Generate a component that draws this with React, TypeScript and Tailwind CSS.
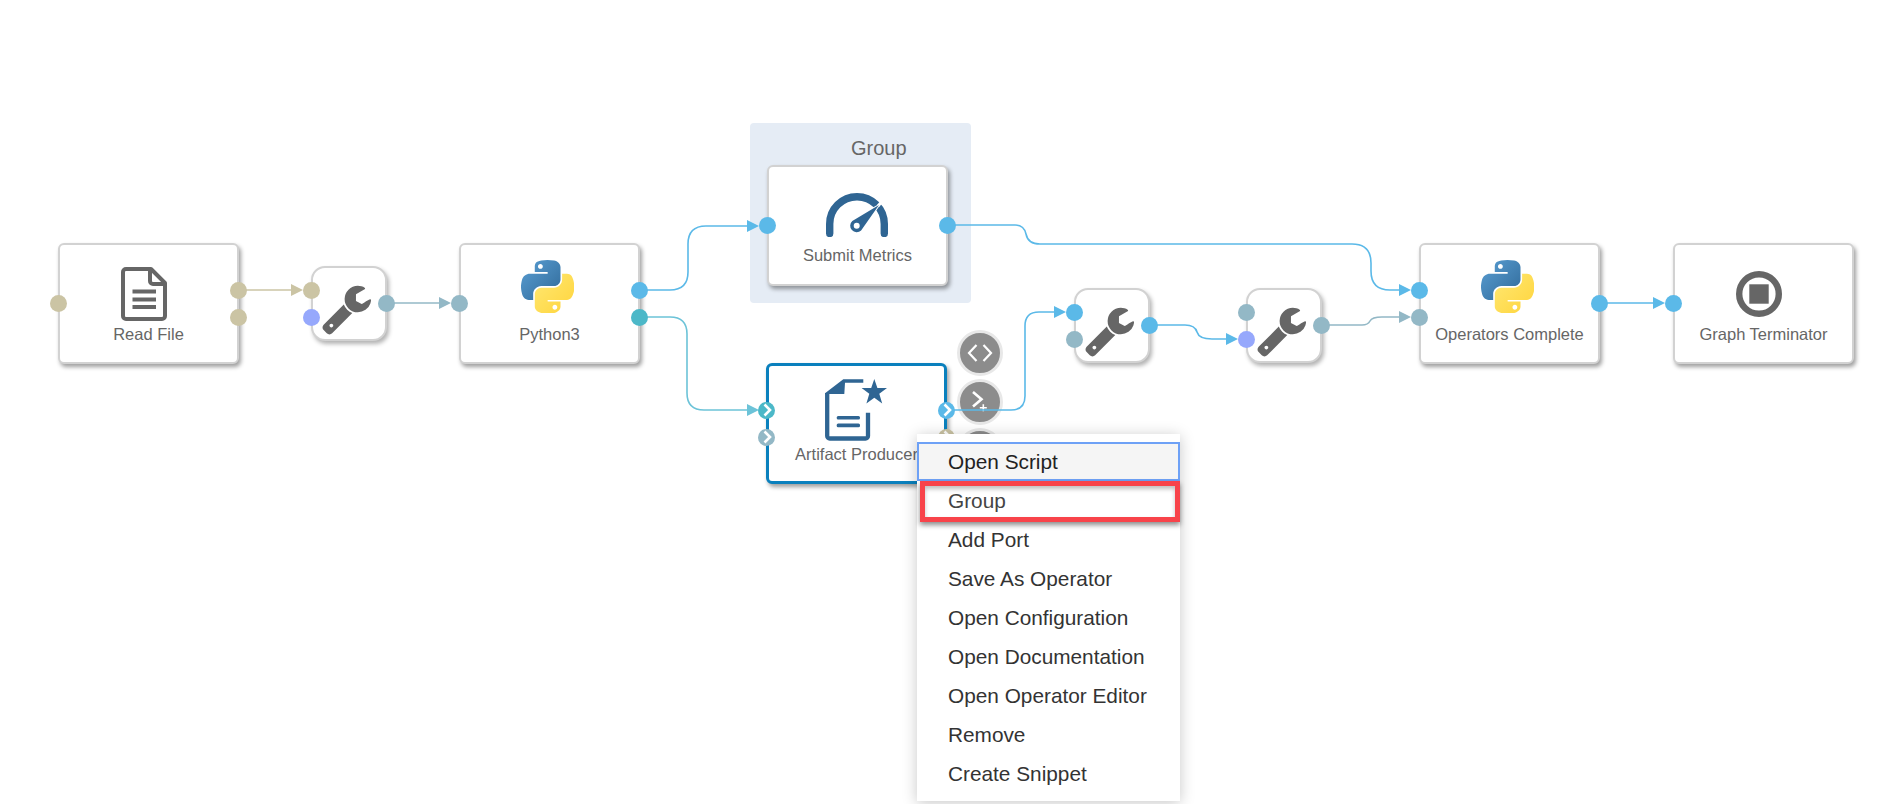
import { useId, type ReactNode } from "react";

const BLUE = "#5bb9e8";
const TAN = "#cbc4a4";
const SLATE = "#93b8c6";
const TEAL = "#6cc3d8";
const INK = "#666666";
const NAVY = "#2f6593";

// port colours
const pTan = "bg-[#cbc4a4]";
const pBlue = "bg-[#5bb9e8]";
const pSlate = "bg-[#93b8c6]";
const pTeal = "bg-[#4cb8c8]";
const pPurple = "bg-[#96a8fc]";

/* ── Icons ─────────────────────────────────────────────────── */

function PythonIcon() {
  const id = useId();
  return (
    <svg width="53" height="53" viewBox="0 0 110.4 110.4">
      <defs>
        <linearGradient id={`${id}b`} x1="0" y1="0" x2="1" y2="1">
          <stop offset="0" stopColor="#5a9fd4" />
          <stop offset="1" stopColor="#306998" />
        </linearGradient>
        <linearGradient id={`${id}y`} x1="0" y1="0" x2="1" y2="1">
          <stop offset="0" stopColor="#ffe873" />
          <stop offset="1" stopColor="#ffd43b" />
        </linearGradient>
      </defs>
      <path
        fill={`url(#${id}b)`}
        fillRule="evenodd"
        d="M54.919 0.001c-4.584.022-8.961.413-12.812 1.095C30.762 3.099 28.702 7.295 28.702 15.032v10.219h26.812v3.406H18.64c-7.792 0-14.616 4.684-16.75 13.594-2.462 10.213-2.571 16.586 0 27.25 1.906 7.938 6.458 13.594 14.25 13.594h9.219V70.844c0-8.85 7.657-16.656 16.75-16.656h26.781c7.455 0 13.406-6.138 13.406-13.625V15.032c0-7.266-6.13-12.725-13.406-13.937C64.282.328 59.502-.02 54.919 0.001zM40.419 8.219c2.77 0 5.031 2.299 5.031 5.125 0 2.816-2.262 5.094-5.031 5.094-2.78 0-5.031-2.277-5.031-5.094 0-2.826 2.252-5.125 5.031-5.125z"
      />
      <path
        fill={`url(#${id}y)`}
        fillRule="evenodd"
        d="M85.638 28.657v11.906c0 9.231-7.826 17-16.75 17H42.107c-7.336 0-13.406 6.278-13.406 13.625v25.531c0 7.266 6.319 11.54 13.406 13.625 8.487 2.496 16.626 2.947 26.781 0 6.75-1.954 13.406-5.888 13.406-13.625V86.5H55.513v-3.406h40.187c7.792 0 10.696-5.435 13.406-13.594 2.799-8.399 2.68-16.476 0-27.25-1.926-7.757-5.604-13.594-13.406-13.594H85.638zM70.575 93.313c2.78 0 5.031 2.277 5.031 5.094 0 2.826-2.252 5.125-5.031 5.125-2.77 0-5.031-2.299-5.031-5.125 0-2.816 2.262-5.094 5.031-5.094z"
      />
    </svg>
  );
}

function FileIcon() {
  return (
    <svg width="46" height="54" viewBox="0 0 46 54" fill="none" stroke={INK} strokeWidth="4" strokeLinejoin="round">
      <path d="M5 2H30L44 16V49a3 3 0 0 1-3 3H5a3 3 0 0 1-3-3V5a3 3 0 0 1 3-3z" />
      <path d="M29 2V14a3 3 0 0 0 3 3H44" />
      <path d="M11.5 24.5H35M11.5 32.5H35M11.5 40H35" />
    </svg>
  );
}

function WrenchIcon() {
  return (
    <svg width="53" height="53" viewBox="0 0 1792 1792" fill={INK}>
      <path d="M448 1472q0-26-19-45t-45-19-45 19-19 45 19 45 45 19 45-19 19-45zm644-420l-682 682q-37 37-90 37-52 0-91-37l-106-108q-38-36-38-90 0-53 38-91l681-681q39 98 114.5 173.5t173.5 114.5zm634-435q0 39-23 106-47 134-164.5 217.5t-258.5 83.5q-185 0-316.5-131.5t-131.5-316.5 131.5-316.5 316.5-131.5q58 0 121.5 16.5t107.5 46.5q16 11 16 28t-16 28l-293 169v224l193 107q5-3 79-48.5t135.5-81 70.5-35.5q15 0 23.5 10t8.5 25z" />
    </svg>
  );
}

function GaugeIcon() {
  return (
    <svg width="62" height="44" viewBox="0 0 62 44" fill="none">
      <path d="M3.7 40.5V31A27.3 27.3 0 0 1 58.3 31V40.5" stroke={NAVY} strokeWidth="7.4" strokeLinecap="round" />
      <path d="M52 13L60 4" stroke="#ffffff" strokeWidth="3" />
      <path
        d="M53 12L35.1 37.5A6.5 6.5 0 1 1 26.3 27.9z"
        fill={NAVY}
        stroke="#ffffff"
        strokeWidth="2"
        paintOrder="stroke"
      />
      <circle cx="30.7" cy="32.7" r="3" fill="#ffffff" />
    </svg>
  );
}

function ArtifactIcon() {
  return (
    <svg width="64" height="62" viewBox="0 0 64 62" fill={NAVY}>
      <path d="M0 14.3L18.3.3H38.3V3.7H20L19.3 15H0z" />
      <path d="M2.2 14V57a2.5 2.5 0 0 0 2.5 2.5H40.5A2.5 2.5 0 0 0 43 57V33.7" fill="none" stroke={NAVY} strokeWidth="4.3" />
      <rect x="11.7" y="37" width="23.3" height="3.4" rx="1.5" />
      <rect x="11.7" y="44.4" width="23.3" height="3.8" rx="1.5" />
      <path d="M49.3 0L52.4 9H62L54.3 14.8 57.2 24.4 49.3 18.8 41.4 24.4 44.3 14.8 36.6 9H46.2z" />
    </svg>
  );
}

function StopIcon() {
  return (
    <svg width="46" height="46" viewBox="0 0 46 46">
      <circle cx="23" cy="23" r="19.8" fill="none" stroke={INK} strokeWidth="6.4" />
      <rect x="13.3" y="13.3" width="19.4" height="19.4" fill={INK} />
    </svg>
  );
}

function Chevron() {
  return (
    <svg width="16" height="16" viewBox="0 0 16 16" fill="none" stroke="#ffffff" strokeWidth="2.6">
      <path d="M5.5 2.5L11 8 5.5 13.5" />
    </svg>
  );
}

/* ── Canvas pieces ─────────────────────────────────────────── */

function Ports({
  side,
  colors,
  chevron,
}: {
  side: string;
  colors: string[];
  chevron?: boolean;
}) {
  return (
    <div className={`absolute inset-y-0 flex flex-col justify-center gap-[10px] ${side}`}>
      {colors.map((c, i) => (
        <div key={i} className={`flex h-[17px] w-[17px] items-center justify-center rounded-full ${c}`}>
          {chevron && <Chevron />}
        </div>
      ))}
    </div>
  );
}

function Node({
  className,
  label,
  iconClass,
  inPorts,
  outPorts,
  selected,
  children,
}: {
  className: string;
  label: string;
  iconClass: string;
  inPorts: string[];
  outPorts: string[];
  selected?: boolean;
  children: ReactNode;
}) {
  return (
    <div
      className={`absolute box-border flex h-[121px] w-[181px] flex-col items-center rounded-[6px] bg-white text-[16.5px] leading-[20px] text-[#666] shadow-[2px_3px_4px_rgba(0,0,0,0.38)] ${
        selected ? "border-[3px] border-[#0a80bd] pt-[13px]" : "border-2 border-[#d2d2d2] pt-[14px]"
      } ${className}`}
    >
      <div className={`flex h-[64px] items-start ${iconClass}`}>{children}</div>
      <div className="mt-px whitespace-nowrap">{label}</div>
      <Ports side={selected ? "-left-[11px]" : "-left-[10px]"} colors={inPorts} chevron={selected} />
      <Ports side={selected ? "-right-[11px]" : "-right-[10px]"} colors={outPorts} chevron={selected} />
    </div>
  );
}

function WrenchNode({
  className,
  inPorts,
  outPorts,
}: {
  className: string;
  inPorts: string[];
  outPorts: string[];
}) {
  return (
    <div
      className={`absolute box-border h-[75px] w-[76px] rounded-[14px] border-2 border-[#d2d2d2] bg-white pl-[7px] pt-[14px] shadow-[2px_3px_4px_rgba(0,0,0,0.3)] ${className}`}
    >
      <WrenchIcon />
      <Ports side="-left-[10px]" colors={inPorts} />
      <Ports side="-right-[10px]" colors={outPorts} />
    </div>
  );
}

function Edge({ d, color }: { d: string; color: string }) {
  return <path d={d} fill="none" stroke={color} strokeWidth="1.6" />;
}

function Arrow({ x, y, color }: { x: number; y: number; color: string }) {
  return <path d={`M${x} ${y}l-12 -6v12z`} fill={color} />;
}

function ActionButton({ children }: { children?: ReactNode }) {
  return (
    <div className="flex h-[46px] w-[46px] items-center justify-center rounded-full border-[3px] border-[#e8e8e8] bg-[#8c8c8c]">
      {children}
    </div>
  );
}

/* ── Page ──────────────────────────────────────────────────── */

const menuItems = [
  "Add Port",
  "Save As Operator",
  "Open Configuration",
  "Open Documentation",
  "Open Operator Editor",
  "Remove",
  "Create Snippet",
];

export default function App() {
  return (
    <div className="relative h-[804px] w-[1881px] overflow-hidden bg-white font-['Liberation_Sans',Arial,sans-serif]">
      {/* Group frame */}
      <div className="absolute left-[750px] top-[123px] h-[180px] w-[221px] rounded-[4px] bg-[#e5ecf5] pl-[101px] pt-[13px] text-[20px] leading-[24px] text-[#666]">
        Group
      </div>

      {/* Quick actions around the selected operator */}
      <div className="absolute left-[957px] top-[330px] flex flex-col gap-[3px]">
        <ActionButton>
          <svg width="26" height="20" viewBox="0 0 26 20" fill="none" stroke="#ffffff" strokeWidth="2.2">
            <path d="M9.5 2L2 10l7.5 8M16.5 2L24 10l-7.5 8" />
          </svg>
        </ActionButton>
        <ActionButton>
          <svg width="24" height="24" viewBox="0 0 24 24" fill="none" stroke="#ffffff" strokeWidth="2.6">
            <path d="M5 2L13.5 9.2 5 16.5" />
            <path d="M15.3 14.2V21.2M11.8 17.7H18.8" strokeWidth="1.6" />
          </svg>
        </ActionButton>
        <ActionButton />
      </div>

      {/* Connections run over the action buttons and under the operators */}
      <svg className="absolute left-0 top-0" width="1881" height="804">
        <Edge d="M238 290H300" color={TAN} />
        <Arrow x={303} y={290} color={TAN} />
        <Edge d="M386 303H445" color={SLATE} />
        <Arrow x={451} y={303} color={SLATE} />
        <Edge d="M640 290H670Q688 290 688 272V244Q688 226 706 226H750" color={BLUE} />
        <Arrow x={759} y={226} color={BLUE} />
        <Edge d="M640 317H670Q687 317 687 334V393Q687 410 704 410H750" color={TEAL} />
        <Arrow x={759} y={410} color={TEAL} />
        <Edge d="M947 225H1015Q1024 225 1026 234Q1028 244 1040 244H1352Q1371 244 1371 263V271Q1371 290 1390 290H1405" color={BLUE} />
        <Arrow x={1411} y={290} color={BLUE} />
        <Edge d="M947 410H1011Q1025 410 1025 396V326Q1025 312 1039 312H1060" color={BLUE} />
        <Arrow x={1066} y={312} color={BLUE} />
        <Edge d="M1149 325H1185Q1195 325 1197 332Q1199 339 1212 339H1233" color={BLUE} />
        <Arrow x={1238} y={339} color={BLUE} />
        <Edge d="M1321 325H1362Q1368 325 1370 321Q1372 317 1382 317H1405" color={SLATE} />
        <Arrow x={1411} y={317} color={SLATE} />
        <Edge d="M1598 303H1660" color={BLUE} />
        <Arrow x={1665} y={303} color={BLUE} />
      </svg>

      {/* Operators */}
      <Node className="left-[58px] top-[243px]" label="Read File" iconClass="pr-[10px] pt-[8px]" inPorts={[pTan]} outPorts={[pTan, pTan]}>
        <FileIcon />
      </Node>
      <WrenchNode className="left-[311px] top-[266px]" inPorts={[pTan, pPurple]} outPorts={[pSlate]} />
      <Node className="left-[459px] top-[243px]" label="Python3" iconClass="pr-[4px] pt-[1px]" inPorts={[pSlate]} outPorts={[pBlue, pTeal]}>
        <PythonIcon />
      </Node>
      <Node className="left-[767px] top-[165px]" label="Submit Metrics" iconClass="!h-[63px] pr-[2px] pt-[12px]" inPorts={[pBlue]} outPorts={[pBlue]}>
        <GaugeIcon />
      </Node>
      <Node className="left-[766px] top-[363px]" label="Artifact Producer" iconClass="" inPorts={[pTeal, pSlate]} outPorts={[pBlue, pTan]} selected>
        <ArtifactIcon />
      </Node>
      <WrenchNode className="left-[1074px] top-[288px]" inPorts={[pBlue, pSlate]} outPorts={[pBlue]} />
      <WrenchNode className="left-[1246px] top-[288px]" inPorts={[pSlate, pPurple]} outPorts={[pSlate]} />
      <Node className="left-[1419px] top-[243px]" label="Operators Complete" iconClass="pr-[4px] pt-[1px]" inPorts={[pBlue, pSlate]} outPorts={[pBlue]}>
        <PythonIcon />
      </Node>
      <Node className="left-[1673px] top-[243px]" label="Graph Terminator" iconClass="pr-[10px] pt-[12px]" inPorts={[pBlue]} outPorts={[]}>
        <StopIcon />
      </Node>

      {/* Context menu */}
      <div className="absolute left-[917px] top-[434px] w-[263px] bg-white pb-[8px] pt-[8px] text-[20.8px] text-[#333] shadow-[0_2px_14px_rgba(0,0,0,0.22)]">
        <div className="flex h-[39px] items-center border-2 border-[#6ea1f6] bg-[#f5f5f5] pl-[29px] text-[#222]">
          Open Script
        </div>
        <div className="relative flex h-[39px] items-center pl-[31px] text-[#444]">
          Group
          <div className="absolute left-[3px] right-0 top-0 h-[41px] border-[5px] border-[#f8434a] shadow-[0_3px_5px_rgba(0,0,0,0.45),inset_0_3px_4px_rgba(0,0,0,0.25)]" />
        </div>
        {menuItems.map((item) => (
          <div key={item} className="flex h-[39px] items-center pl-[31px]">
            {item}
          </div>
        ))}
      </div>
    </div>
  );
}
